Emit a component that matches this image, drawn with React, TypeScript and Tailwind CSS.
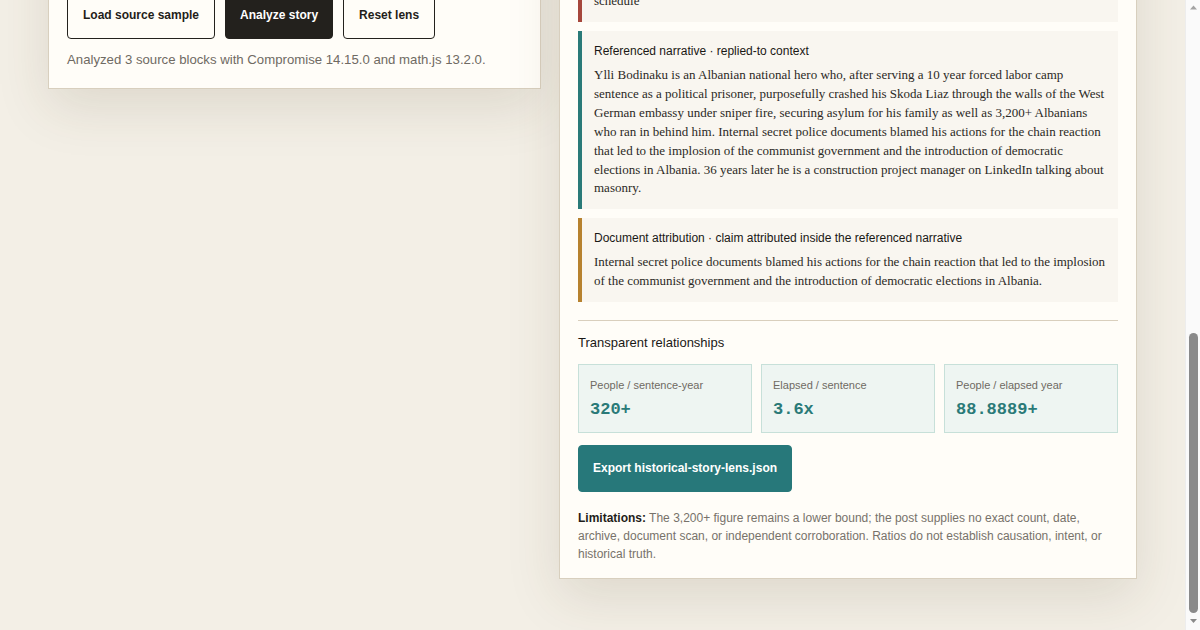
import { useLayoutEffect } from "react";

const sans = { fontFamily: '"Liberation Sans", Arial, sans-serif' };
const serif = { fontFamily: '"Liberation Serif", "Times New Roman", serif' };
const mono = { fontFamily: '"Liberation Mono", "Courier New", monospace' };

type Block = { title: string; body: string; bar: string; size: string };

const blocks: Block[] = [
  {
    title: "Reply post · the comment being answered",
    body:
      "Meanwhile my biggest act of rebellion this year was leaving the office ten minutes early and then apologising to the whole team the next morning for quietly disrupting their carefully planned shift schedule",
    bar: "border-[#a6473c]",
    size: "text-[13px]",
  },
  {
    title: "Referenced narrative · replied-to context",
    body:
      "Ylli Bodinaku is an Albanian national hero who, after serving a 10 year forced labor camp sentence as a political prisoner, purposefully crashed his Skoda Liaz through the walls of the West German embassy under sniper fire, securing asylum for his family as well as 3,200+ Albanians who ran in behind him. Internal secret police documents blamed his actions for the chain reaction that led to the implosion of the communist government and the introduction of democratic elections in Albania. 36 years later he is a construction project manager on LinkedIn talking about masonry.",
    bar: "border-[#2a7a78]",
    size: "text-[13px]",
  },
  {
    title: "Document attribution · claim attributed inside the referenced narrative",
    body:
      "Internal secret police documents blamed his actions for the chain reaction that led to the implosion of the communist government and the introduction of democratic elections in Albania.",
    bar: "border-[#b7822f]",
    size: "text-[12.98px]",
  },
];

const metrics = [
  { label: "People / sentence-year", value: "320+" },
  { label: "Elapsed / sentence", value: "3.6x" },
  { label: "People / elapsed year", value: "88.8889+" },
];

const figures = [
  { label: "Sentence", value: "10 years" },
  { label: "People who followed", value: "3,200+" },
  { label: "Time since", value: "36 years" },
];

const ledger = [
  { claim: "Served a 10 year forced labor camp sentence", source: "Referenced narrative", tone: "text-[#2a7a78]" },
  { claim: "Crashed a Skoda Liaz into the West German embassy", source: "Referenced narrative", tone: "text-[#2a7a78]" },
  { claim: "3,200+ Albanians followed him inside", source: "Referenced narrative", tone: "text-[#2a7a78]" },
  { claim: "Actions blamed for the fall of the government", source: "Document attribution", tone: "text-[#b7822f]" },
];

function Field({ label, value, rows }: { label: string; value: string; rows: string }) {
  return (
    <label className="flex flex-col gap-[6px]">
      <span className="text-[12px] font-bold text-[#2a2824]">{label}</span>
      <textarea
        readOnly
        value={value}
        className={`${rows} resize-none border border-[#cfc6b4] bg-white px-[10px] py-[8px] text-[13px] leading-[1.45] text-[#2b2925] outline-none`}
        style={serif}
      />
    </label>
  );
}

export default function App() {
  useLayoutEffect(() => {
    window.scrollTo(0, document.documentElement.scrollHeight);
  }, []);

  return (
    <div className="min-h-screen bg-[#f3efe6] pt-12 pr-[63px] pb-[51px] pl-12 text-[#1f1d1a]" style={sans}>
      <div className="grid grid-cols-[493px_1fr] items-start gap-[18px]">
        {/* Input panel */}
        <section className="border border-[#d8cfbe] bg-[#fffdf8] p-[18px] shadow-[0_18px_50px_rgba(80,60,30,0.13)]">
          <p className="text-[11px] font-bold uppercase tracking-[0.12em] text-[#2a7a78]">Historical story lens</p>
          <h1 className="mt-[8px] text-[26px] leading-[1.2] text-[#1f1d1a]" style={serif}>
            Separate a reply from the story it quotes
          </h1>
          <p className="mt-[10px] text-[13px] leading-[1.55] text-[#6f6a63]">
            Paste each layer of the thread on its own. The lens keeps who said what apart, pulls the figures out and
            shows the arithmetic between them.
          </p>

          <div className="mt-[18px] flex flex-col gap-[14px]">
            <Field label="Reply post" value={blocks[0].body} rows="h-[96px]" />
            <Field label="Referenced narrative" value={blocks[1].body} rows="h-[229px]" />
            <Field label="Document attribution" value={blocks[2].body} rows="h-[78px]" />
          </div>

          <div className="mt-[18px] flex gap-[10px]">
            <button className="rounded-[4px] border border-[#23211d] bg-transparent px-[15px] py-[15px] text-[12px] font-bold leading-[15px] text-[#1f1d1a]">
              Load source sample
            </button>
            <button className="rounded-[4px] border border-[#23211d] bg-[#23211d] px-[14px] py-[15px] text-[12px] font-bold leading-[15px] text-white">
              Analyze story
            </button>
            <button className="rounded-[4px] border border-[#23211d] bg-transparent px-[15px] py-[15px] text-[12px] font-bold leading-[15px] text-[#1f1d1a]">
              Reset lens
            </button>
          </div>
          <p className="mt-[10px] text-[13.2px] leading-[21px] text-[#6f6a63]">
            Analyzed 3 source blocks with Compromise 14.15.0 and math.js 13.2.0.
          </p>
        </section>

        {/* Output panel */}
        <section className="border border-[#d8cfbe] bg-[#fffdf8] px-[18px] pt-[18px] pb-[15px] shadow-[0_18px_50px_rgba(80,60,30,0.13)]">
          <p className="text-[11px] font-bold uppercase tracking-[0.12em] text-[#2a7a78]">Lens output</p>
          <h2 className="mt-[8px] text-[22px] leading-[1.25]" style={serif}>
            Three voices, one thread
          </h2>
          <p className="mt-[8px] text-[13px] leading-[1.55] text-[#6f6a63]">
            The reply, the story it answers and the document claim nested inside that story are kept as separate
            sources. Nothing below checks whether the story is true.
          </p>

          <div className="mt-[16px] grid grid-cols-3 gap-[9px]">
            {figures.map((f) => (
              <div key={f.label} className="border border-[#e3dccd] bg-[#f9f6f0] px-[12px] py-[10px]">
                <p className="text-[11px] text-[#6f6a63]">{f.label}</p>
                <p className="mt-[4px] text-[15px] font-bold text-[#1f1d1a]">{f.value}</p>
              </div>
            ))}
          </div>

          <div className="mt-[16px] border-t border-[#d9cfbd] pt-[14px]">
            <h3 className="text-[13px] leading-[18px] text-[#1f1d1a]">Detected people and places</h3>
            <div className="mt-[10px] flex flex-wrap gap-[6px]">
              {["Ylli Bodinaku", "Albania", "West German embassy", "Skoda Liaz", "LinkedIn"].map((t) => (
                <span key={t} className="rounded-full border border-[#d8cfbe] bg-[#f9f6f0] px-[10px] py-[4px] text-[11px] text-[#4a4640]">
                  {t}
                </span>
              ))}
            </div>
          </div>

          <div className="mt-[18px] border-t border-[#d9cfbd] pt-[14px]">
            <h3 className="text-[13px] leading-[18px] text-[#1f1d1a]">Claim ledger</h3>
            <ul className="mt-[10px] flex flex-col gap-[6px]">
              {ledger.map((l) => (
                <li key={l.claim} className="flex items-center justify-between border border-[#e3dccd] bg-[#f9f6f0] px-[12px] py-[10px]">
                  <span className="text-[13px] text-[#2b2925]" style={serif}>
                    {l.claim}
                  </span>
                  <span className={`text-[11px] font-bold ${l.tone}`}>{l.source}</span>
                </li>
              ))}
            </ul>
          </div>

          <div className="mt-[18px] border-t border-[#d9cfbd] pt-[14px]">
            <h3 className="text-[13px] leading-[18px] text-[#1f1d1a]">Source layers</h3>
          </div>

          <div className="mt-[10px] flex flex-col gap-[9px]">
            {blocks.map((b) => (
              <div key={b.title} className={`border-l-4 ${b.bar} bg-[#f9f6f0] py-[11px] pr-[12px] pl-[12px]`}>
                <p className="text-[12px] leading-[18px] text-[#1a1815]">{b.title}</p>
                <p className={`mt-[6px] ${b.size} leading-[18.85px] text-[#2b2925]`} style={serif}>
                  {b.body}
                </p>
              </div>
            ))}
          </div>

          <div className="mt-[18px] border-t border-[#d9cfbd] pt-[13px]">
            <h3 className="text-[13px] leading-[18px] text-[#1a1815]">Transparent relationships</h3>
            <div className="mt-[12px] grid grid-cols-3 gap-[9px]">
              {metrics.map((m) => (
                <div key={m.label} className="border border-[#c7e0d9] bg-[#eef5f2] px-[11px] py-[12px]">
                  <p className="text-[11px] leading-[16px] text-[#6f6a63]">{m.label}</p>
                  <p className="mt-[7px] text-[17px] font-bold leading-[20px] text-[#2a7a78]" style={mono}>
                    {m.value}
                  </p>
                </div>
              ))}
            </div>
            <button className="mt-[12px] rounded-[4px] border border-[#27787a] bg-[#27787a] px-[14px] py-[15px] text-[12px] font-bold leading-[15px] text-white">
              Export historical-story-lens.json
            </button>
            <p className="mt-[17px] text-[12px] leading-[18px] text-[#77726a]">
              <span className="font-bold text-[#1f1d1a]">Limitations:</span> The 3,200+ figure remains a lower bound;
              the post supplies no exact count, date, archive, document scan, or independent corroboration. Ratios do
              not establish causation, intent, or historical truth.
            </p>
          </div>
        </section>
      </div>

      {/* Window scrollbar, drawn over the page edge */}
      <div aria-hidden className="fixed top-0 right-0 flex h-full w-[15px] flex-col items-center border-l border-[#ededed] bg-[#fafafa]">
        <svg width="15" height="15" viewBox="0 0 15 15" className="shrink-0">
          <path d="M4 9.5 L7.5 5.5 L11 9.5 Z" fill="#a3a3a3" />
        </svg>
        <div className="flex-1" />
        <div className="h-[280px] w-[9px] shrink-0 rounded-full bg-[#8a8a8a]" />
        <svg width="15" height="17" viewBox="0 0 15 17" className="shrink-0">
          <path d="M4 6 L11 6 L7.5 10 Z" fill="#8a8a8a" />
        </svg>
      </div>
    </div>
  );
}
